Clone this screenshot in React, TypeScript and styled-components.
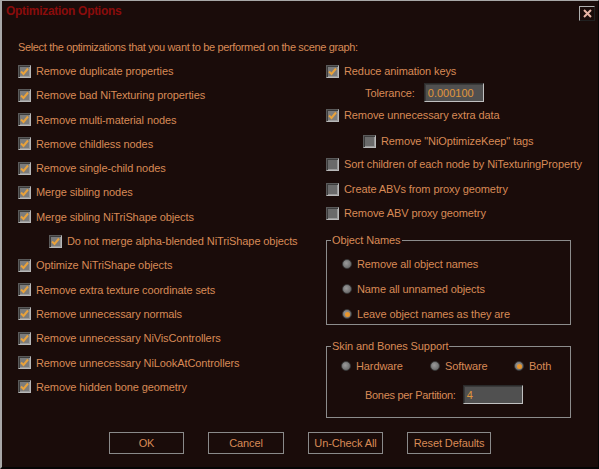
import React from "react";
import styled, { createGlobalStyle } from "styled-components";

const Global = createGlobalStyle`
  html, body { margin: 0; padding: 0; background: #000; }
  body { font-family: "Liberation Sans", Arial, sans-serif; }
`;

const FG = "#d88a56";

const Win = styled.div`
  width: 599px;
  height: 469px;
  box-sizing: border-box;
  background: #1a0c0a;
  border-top: 1px solid #a8a8a8;
  border-left: 2px solid #a8a8a8;
  border-right: 1px solid #050505;
  border-bottom: 2px solid #050505;
  display: flex;
  flex-direction: column;
  color: ${FG};
  font-size: 11px;
  overflow: hidden;
`;

const TitleBar = styled.div`
  height: 22px;
  display: flex;
  align-items: center;
  justify-content: space-between;
  padding: 0 3px 0 4px;
`;

const Title = styled.div`
  color: #8a0c0c;
  font-weight: bold;
  font-size: 12px;
  letter-spacing: -0.3px;
  margin-top: -2px;
`;

const CloseBtn = styled.div`
  width: 16px;
  height: 15px;
  box-sizing: border-box;
  border-top: 1px solid #b0b0b0;
  border-left: 1px solid #b0b0b0;
  border-right: 1px solid #202020;
  border-bottom: 1px solid #202020;
  display: flex;
  align-items: center;
  justify-content: center;
  margin-top: 2px;
`;

const Body = styled.div`
  flex: 1;
  display: flex;
  flex-direction: column;
  padding: 17px 0 0 16px;
`;

const Intro = styled.div`
  height: 14px;
  line-height: 14px;
  letter-spacing: -0.35px;
`;

const Columns = styled.div`
  display: flex;
  margin-top: 10px;
`;

const LeftCol = styled.div`
  width: 308px;
  display: grid;
  grid-auto-rows: 24.3px;
  align-items: start;
`;

const RightCol = styled.div`
  width: 246px;
  display: flex;
  flex-direction: column;
`;

const Row = styled.div<{ $indent?: number; $mt?: number }>`
  display: flex;
  align-items: center;
  height: 14px;
  padding-left: ${(p) => p.$indent ?? 0}px;
  margin-top: ${(p) => p.$mt ?? 0}px;
  white-space: nowrap;
`;

const Box = styled.span<{ $on: boolean }>`
  width: 13px;
  height: 13px;
  box-sizing: border-box;
  border-top: 1px solid #5a5a5a;
  border-left: 1px solid #5a5a5a;
  border-right: 1px solid #b8b8b8;
  border-bottom: 1px solid #b8b8b8;
  background: ${(p) => (p.$on ? "#7c7c7c" : "#6a6a6a")};
  box-shadow: inset 1px 1px 0 #3c3c3c, inset -1px -1px 0 #9a9a9a;
  margin-right: 5px;
  display: flex;
  align-items: center;
  justify-content: center;
  flex-shrink: 0;
`;

const Label = styled.span<{ $ls?: number }>`
  letter-spacing: ${(p) => p.$ls ?? -0.1}px;
`;

function Check({ on, label, indent, mt }: { on: boolean; label: string; indent?: number; mt?: number }) {
  return (
    <Row $indent={indent} $mt={mt}>
      <Box $on={on}>
        {on && (
          <svg width="9" height="9" viewBox="0 0 9 9">
            <path d="M1 4.5 L3.5 7 L8 1.5" stroke="#e8a23c" strokeWidth="2" fill="none" />
          </svg>
        )}
      </Box>
      <Label>{label}</Label>
    </Row>
  );
}

const FieldRow = styled.div<{ $indent: number; $mt?: number; $gap?: number }>`
  display: flex;
  align-items: center;
  padding-left: ${(p) => p.$indent}px;
  margin-top: ${(p) => p.$mt ?? 0}px;
  gap: ${(p) => p.$gap ?? 9}px;
`;

const Input = styled.div<{ $w: number }>`
  width: ${(p) => p.$w}px;
  height: 19px;
  box-sizing: border-box;
  background: #505050;
  border-top: 1px solid #2a2a2a;
  border-left: 1px solid #2a2a2a;
  border-right: 1px solid #c0c0c0;
  border-bottom: 1px solid #c0c0c0;
  box-shadow: inset 1px 1px 0 #3a3a3a;
  color: #e0963c;
  padding: 2px 0 0 3px;
  line-height: 14px;
  font-size: 11px;
`;

const Group = styled.fieldset<{ $mt: number; $h: number }>`
  margin: ${(p) => p.$mt}px 0 0 0;
  padding: 0;
  width: 245px;
  height: ${(p) => p.$h}px;
  box-sizing: border-box;
  border: 1px solid #8c8c8c;
  min-width: 0;
`;

const Legend = styled.legend`
  margin-left: 4px;
  padding: 0 1px;
  line-height: 12px;
  font-size: 11px;
  letter-spacing: -0.1px;
`;

const GroupInner = styled.div<{ $pl: number; $pt: number }>`
  display: flex;
  flex-direction: column;
  padding: ${(p) => p.$pt}px 0 0 ${(p) => p.$pl}px;
`;

const RadioRowH = styled.div`
  display: flex;
  align-items: center;
  height: 14px;
`;

const RadioItem = styled.div<{ $w?: number; $mt?: number }>`
  display: flex;
  align-items: center;
  height: 14px;
  width: ${(p) => (p.$w ? `${p.$w}px` : "auto")};
  margin-top: ${(p) => p.$mt ?? 0}px;
  white-space: nowrap;
`;

const Dot = styled.span<{ $on: boolean }>`
  width: 10px;
  height: 10px;
  border-radius: 50%;
  box-sizing: border-box;
  background: radial-gradient(circle at 40% 40%, #9a9a9a, #5c5c5c);
  border: 1px solid #3a3a3a;
  margin-right: 5px;
  display: flex;
  align-items: center;
  justify-content: center;
  flex-shrink: 0;
  &::after {
    content: "";
    display: ${(p) => (p.$on ? "block" : "none")};
    width: 5px;
    height: 5px;
    border-radius: 50%;
    background: #e8962c;
  }
`;

function Radio({ on, label, w, mt }: { on: boolean; label: string; w?: number; mt?: number }) {
  return (
    <RadioItem $w={w} $mt={mt}>
      <Dot $on={on} />
      <Label>{label}</Label>
    </RadioItem>
  );
}

const Buttons = styled.div`
  display: flex;
  justify-content: center;
  gap: 24px;
  margin-top: auto;
  margin-bottom: 13px;
  margin-left: -16px;
`;

const Btn = styled.div<{ $w: number }>`
  width: ${(p) => p.$w}px;
  height: 22px;
  box-sizing: border-box;
  border: 1px solid #8a8a8a;
  display: flex;
  align-items: center;
  justify-content: center;
  font-size: 11px;
  letter-spacing: -0.1px;
`;

const leftItems: { label: string; on: boolean; indent?: number }[] = [
  { label: "Remove duplicate properties", on: true },
  { label: "Remove bad NiTexturing properties", on: true },
  { label: "Remove multi-material nodes", on: true },
  { label: "Remove childless nodes", on: true },
  { label: "Remove single-child nodes", on: true },
  { label: "Merge sibling nodes", on: true },
  { label: "Merge sibling NiTriShape objects", on: true },
  { label: "Do not merge alpha-blended NiTriShape objects", on: true, indent: 31 },
  { label: "Optimize NiTriShape objects", on: true },
  { label: "Remove extra texture coordinate sets", on: true },
  { label: "Remove unnecessary normals", on: true },
  { label: "Remove unnecessary NiVisControllers", on: true },
  { label: "Remove unnecessary NiLookAtControllers", on: true },
  { label: "Remove hidden bone geometry", on: true },
];

export default function App() {
  return (
    <>
      <Global />
      <Win>
        <TitleBar>
          <Title>Optimization Options</Title>
          <CloseBtn>
            <svg width="9" height="9" viewBox="0 0 9 9">
              <path d="M1 1 L8 8 M8 1 L1 8" stroke="#e8b4a4" strokeWidth="2" />
            </svg>
          </CloseBtn>
        </TitleBar>
        <Body>
          <Intro>Select the optimizations that you want to be performed on the scene graph:</Intro>
          <Columns>
            <LeftCol>
              {leftItems.map((it) => (
                <Check key={it.label} on={it.on} label={it.label} indent={it.indent} />
              ))}
            </LeftCol>
            <RightCol>
              <Check on label="Reduce animation keys" />
              <FieldRow $indent={39} $mt={5}>
                <Label>Tolerance:</Label>
                <Input $w={60}>0.000100</Input>
              </FieldRow>
              <Check on label="Remove unnecessary extra data" mt={6} />
              <Check on={false} label={'Remove "NiOptimizeKeep" tags'} indent={37} mt={12} />
              <Check on={false} label="Sort children of each node by NiTexturingProperty" mt={9} />
              <Check on={false} label="Create ABVs from proxy geometry" mt={11} />
              <Check on={false} label="Remove ABV proxy geometry" mt={10} />
              <Group $mt={14} $h={91}>
                <Legend>Object Names</Legend>
                <GroupInner $pl={15} $pt={11}>
                  <Radio on={false} label="Remove all object names" />
                  <Radio on={false} label="Name all unnamed objects" mt={11} />
                  <Radio on label="Leave object names as they are" mt={11} />
                </GroupInner>
              </Group>
              <Group $mt={15} $h={78}>
                <Legend>Skin and Bones Support</Legend>
                <GroupInner $pl={14} $pt={7}>
                  <RadioRowH>
                    <Radio on={false} label="Hardware" w={89} />
                    <Radio on={false} label="Software" w={84} />
                    <Radio on label="Both" />
                  </RadioRowH>
                  <FieldRow $indent={24} $mt={12} $gap={7}>
                    <Label $ls={-0.3}>Bones per Partition:</Label>
                    <Input $w={60}>4</Input>
                  </FieldRow>
                </GroupInner>
              </Group>
            </RightCol>
          </Columns>
          <Buttons>
            <Btn $w={75}>OK</Btn>
            <Btn $w={76}>Cancel</Btn>
            <Btn $w={75}>Un-Check All</Btn>
            <Btn $w={84}>Reset Defaults</Btn>
          </Buttons>
        </Body>
      </Win>
    </>
  );
}
